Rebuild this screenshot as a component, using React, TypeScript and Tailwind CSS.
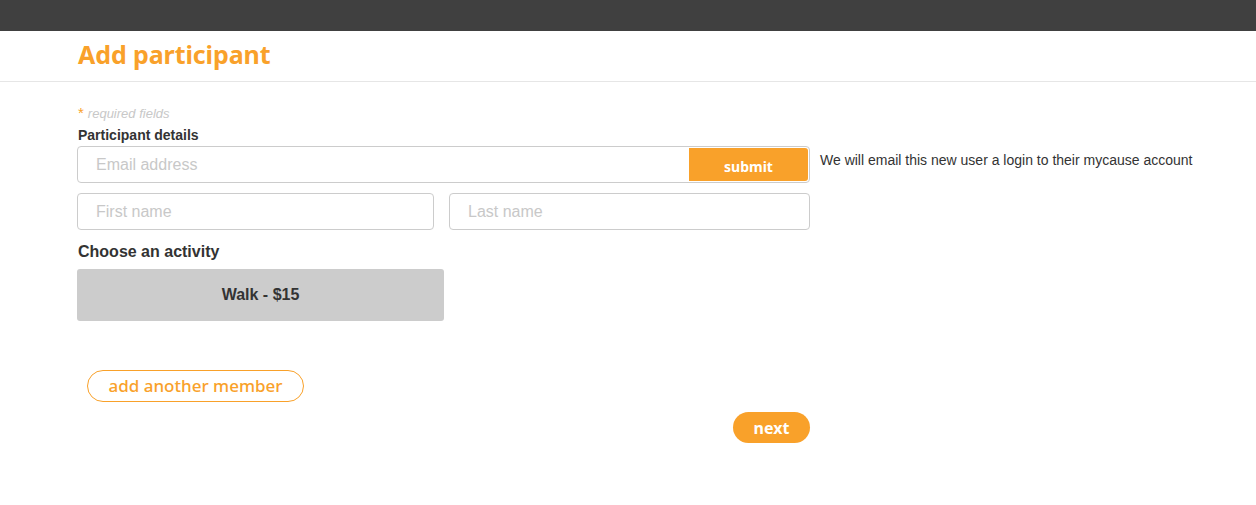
import React from "react";

export default function App() {
  return (
    <div className="min-h-[505px] bg-white" style={{ fontFamily: '"Liberation Sans", Arial, sans-serif' }}>
      <div className="h-[31px] bg-[#404040]" />
      <div className="h-[51px] border-b border-[#e6e6e6] pl-[78px] flex items-center">
        <h1 className="text-[25px] font-bold text-[#f9a12a] leading-none -mt-[3px] tracking-[-0.1px]" style={{ fontFamily: '"Noto Sans", sans-serif' }}>
          Add participant
        </h1>
      </div>
      <div className="pl-[77px] pt-[24px]">
        <div className="text-[13px] italic text-[#c8c8c8] leading-[14px] flex items-baseline">
          <span className="text-[#f9a12a] not-italic text-[15px] pl-[1px] mr-[4px]">*</span>
          <span>required fields</span>
        </div>
        <div className="text-[14px] font-bold text-[#333] mt-[6px] leading-[16px] pl-[1px]">Participant details</div>
        <div className="flex items-center mt-[3px]">
          <div className="w-[733px] h-[37px] border border-[#cccccc] rounded-[4px] flex items-center pl-[18px] pr-[1px]">
            <input
              className="flex-1 outline-none text-[16px] text-[#333] placeholder:text-[#c8c8c8] bg-transparent"
              placeholder="Email address"
            />
            <button className="w-[119px] h-[33px] bg-[#f9a12a] text-white text-[14px] font-bold rounded-r-[3px] pt-[3px]" style={{ fontFamily: '"Noto Sans", sans-serif' }}>
              submit
            </button>
          </div>
          <div className="ml-[10px] text-[14px] text-[#333] -mt-[9px]">We will email this new user a login to their mycause account</div>
        </div>
        <div className="flex gap-[15px] mt-[10px] w-[733px]">
          <input
            className="w-[357px] h-[37px] border border-[#cccccc] rounded-[4px] pl-[18px] outline-none text-[16px] placeholder:text-[#c8c8c8]"
            placeholder="First name"
          />
          <input
            className="w-[361px] h-[37px] border border-[#cccccc] rounded-[4px] pl-[18px] outline-none text-[16px] placeholder:text-[#c8c8c8]"
            placeholder="Last name"
          />
        </div>
        <div className="text-[16px] font-bold text-[#333] mt-[13px] leading-[18px] pl-[1px]">Choose an activity</div>
        <button className="mt-[8px] w-[367px] h-[52px] bg-[#cccccc] rounded-[3px] text-[16px] font-bold text-[#333] flex items-center justify-center">
          Walk - $15
        </button>
        <div className="mt-[49px] pl-[10px]">
          <button className="w-[217px] h-[32px] border border-[#f9a12a] rounded-full text-[#f9a12a] text-[17px] font-medium" style={{ fontFamily: '"Noto Sans", sans-serif' }}>
            add another member
          </button>
        </div>
        <div className="w-[733px] flex justify-end mt-[10px]">
          <button className="w-[77px] h-[31px] bg-[#f9a12a] rounded-full text-white text-[16px] font-bold" style={{ fontFamily: '"Noto Sans", sans-serif' }}>
            next
          </button>
        </div>
      </div>
    </div>
  );
}
